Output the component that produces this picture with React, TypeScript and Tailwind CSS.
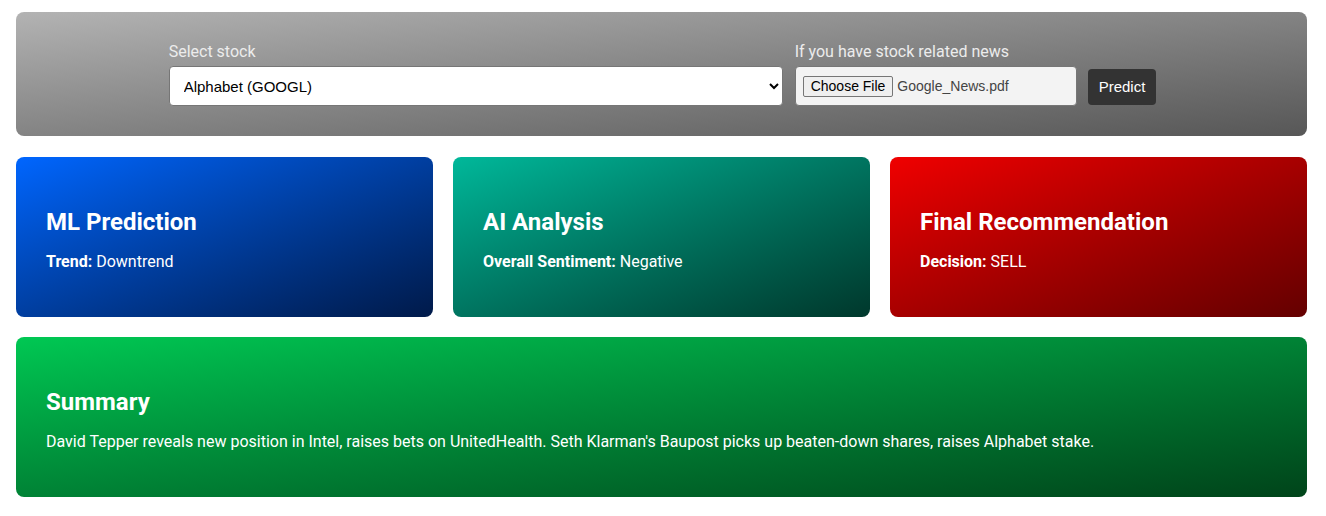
export default function App() {
  const cards = [
    { title: "ML Prediction", label: "Trend:", value: "Downtrend", bg: "bg-gradient-to-br from-[#0066ff] to-[#001a4a]" },
    { title: "AI Analysis", label: "Overall Sentiment:", value: "Negative", bg: "bg-gradient-to-br from-[#00b89a] to-[#00382c]" },
    { title: "Final Recommendation", label: "Decision:", value: "SELL", bg: "bg-gradient-to-br from-[#f00000] to-[#640000]" },
  ];

  return (
    <div className="min-h-screen bg-white pl-4 pr-[19px] pt-3 pb-4 font-['Roboto',sans-serif]">
      {/* Top controls */}
      <div className="h-[124px] rounded-lg bg-gradient-to-br from-[#b3b3b3] to-[#575757] flex items-start justify-center pt-[30px]">
        <div className="flex items-end gap-3 ml-[2px]">
          <div className="flex flex-col">
            <label className="text-[16px] leading-[19px] text-[#ececec] mb-[5px]">Select stock</label>
            <select className="w-[614px] h-[40px] bg-white rounded border border-[#767676] px-[10px] text-[15px] text-black font-['Liberation_Sans',Arial,sans-serif]">
              <option>Alphabet (GOOGL)</option>
            </select>
          </div>
          <div className="flex flex-col">
            <label className="text-[16px] leading-[19px] text-[#ececec] mb-[5px]">If you have stock related news</label>
            <div className="w-[282px] h-[40px] bg-[#f3f3f3] rounded border border-[#767676] flex items-center px-[7px] gap-[4px] font-['Liberation_Sans',Arial,sans-serif]">
              <span className="h-[21px] px-[7px] flex items-center bg-[#efefef] border border-[#767676] rounded-[2px] text-[14px] text-black">Choose File</span>
              <span className="text-[14px] text-[#444]">Google_News.pdf</span>
            </div>
          </div>
          <button className="mb-[1px] ml-[-1px] h-[36px] px-[11px] rounded bg-[#333] text-white text-[15px] font-['Liberation_Sans',Arial,sans-serif]">
            Predict
          </button>
        </div>
      </div>

      {/* Result cards */}
      <div className="grid grid-cols-3 gap-5 mt-[21px]">
        {cards.map((c) => (
          <div key={c.title} className={`${c.bg} h-[160px] rounded-lg px-[30px] pt-[51px] text-white`}>
            <h2 className="text-[24px] leading-[28px] font-bold">{c.title}</h2>
            <p className="mt-[16px] text-[16px] leading-[19px]">
              <span className="font-bold">{c.label}</span> {c.value}
            </p>
          </div>
        ))}
      </div>

      {/* Summary */}
      <div className="mt-5 h-[160px] rounded-lg bg-gradient-to-br from-[#00c853] to-[#00441a] px-[30px] pt-[51px] text-white">
        <h2 className="text-[24px] leading-[28px] font-bold">Summary</h2>
        <p className="mt-[16px] text-[16px] leading-[19px]">
          David Tepper reveals new position in Intel, raises bets on UnitedHealth. Seth Klarman's Baupost picks up beaten-down shares, raises Alphabet stake.
        </p>
      </div>
    </div>
  );
}
